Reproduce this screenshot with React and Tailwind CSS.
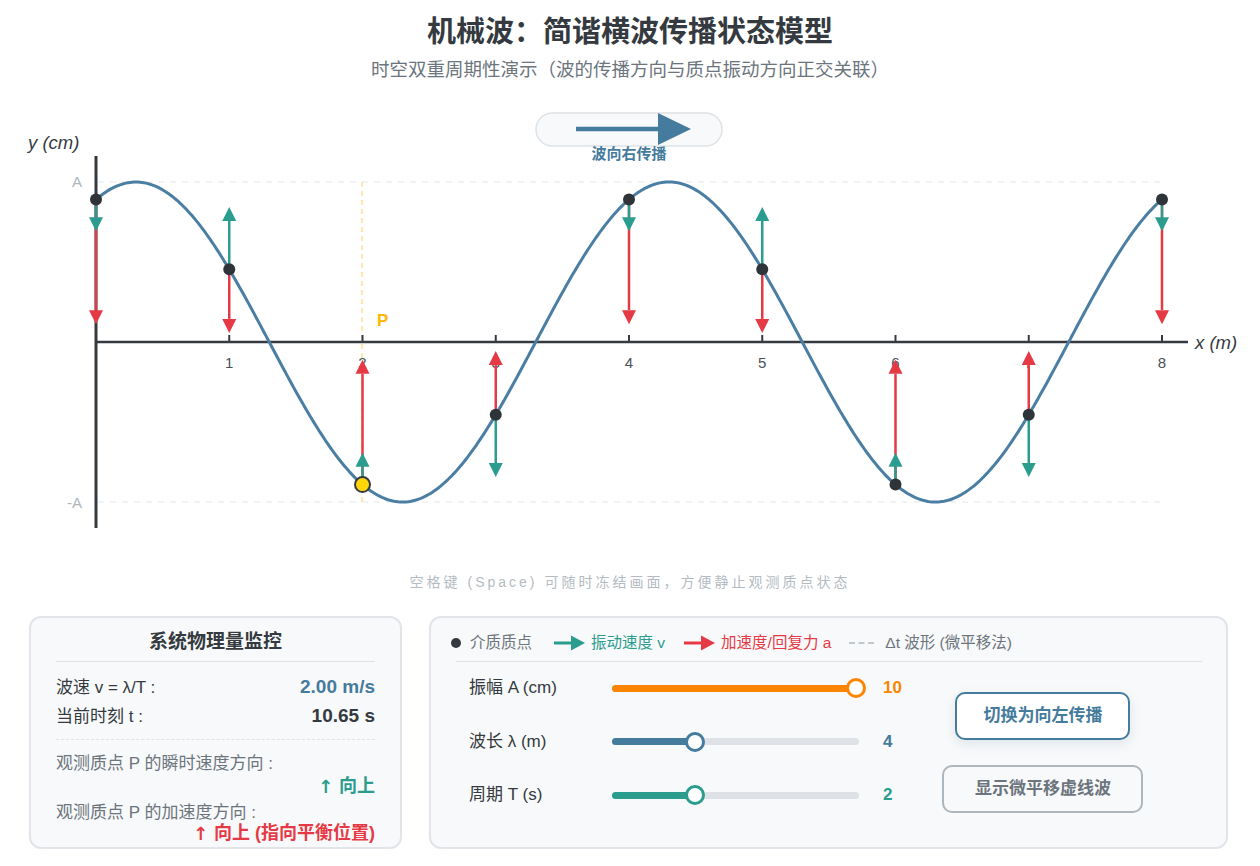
import React from 'react';

const X0 = 96;
const SX = 133.25;
const Y0 = 342;
const AMP = 160;

const disp = (m) => Math.cos((2 * Math.PI * (m - 0.3)) / 4);
const vel = (m) => Math.sin((2 * Math.PI * (m - 0.3)) / 4);

const RED = '#e63946';
const TEAL = '#2a9d8f';
const BLUE = '#457b9d';
const DARK = '#343a40';

function wavePath() {
    const pts = [];
    for (let px = 0; px <= 1066; px += 2) {
        const m = px / SX;
        pts.push(`${(X0 + px).toFixed(1)},${(Y0 - AMP * disp(m)).toFixed(1)}`);
    }
    return 'M' + pts.join(' L');
}

const VArrow = ({ x, y, len, color }) => {
    // len > 0 means downward, < 0 upward
    const dir = len > 0 ? 1 : -1;
    const tip = y + len;
    const base = tip - dir * 14;
    return (
        <g>
            {Math.abs(len) > 14 && (
                <line x1={x} y1={y} x2={x} y2={base} stroke={color} strokeWidth="2.5" />
            )}
            <polygon points={`${x - 7},${base} ${x + 7},${base} ${x},${tip}`} fill={color} />
        </g>
    );
};

const WaveChart = () => {
    const marks = [0, 1, 2, 3, 4, 5, 6, 7, 8].map((m) => ({
        m,
        x: X0 + m * SX,
        y: Y0 - AMP * disp(m),
        v: vel(m),
        d: disp(m),
    }));

    return (
        <svg width="1260" height="482" viewBox="0 90 1260 482" className="block">
            {/* direction pill */}
            <rect x="536" y="113" width="186" height="33" rx="16.5" fill="#f8f9fa" stroke="#dee2e6" strokeWidth="1.5" />
            <line x1="576" y1="129" x2="660" y2="129" stroke={BLUE} strokeWidth="4.5" />
            <polygon points="658,113 691,129 658,145" fill={BLUE} />
            <text x="629" y="159" textAnchor="middle" fontSize="15" fontWeight="700" fill={BLUE}>波向右传播</text>

            {/* amplitude guides */}
            <line x1="98" y1="182" x2="1160" y2="182" stroke="#e3e6ea" strokeWidth="1" strokeDasharray="6 6" />
            <line x1="98" y1="502" x2="1160" y2="502" stroke="#e3e6ea" strokeWidth="1" strokeDasharray="6 6" />
            <text x="82" y="187" textAnchor="end" fontSize="15" fill="#adb5bd">A</text>
            <text x="82" y="508" textAnchor="end" fontSize="15" fill="#adb5bd">-A</text>

            {/* P guide */}
            <line x1="362" y1="182" x2="362" y2="502" stroke="#ffd166" strokeOpacity="0.7" strokeWidth="1.5" strokeDasharray="5 4" />
            <text x="377" y="326" fontSize="17" fontWeight="700" fill="#ffb703">P</text>

            {/* axes */}
            <line x1="96" y1="156" x2="96" y2="528" stroke={DARK} strokeWidth="3" />
            <line x1="96" y1="342" x2="1188" y2="342" stroke={DARK} strokeWidth="2.5" />
            <text x="28" y="149" fontSize="18.5" fontStyle="italic" fill={DARK}>y (cm)</text>
            <text x="1195" y="349" fontSize="18.5" fontStyle="italic" fill={DARK}>x (m)</text>
            {[1, 2, 3, 4, 5, 6, 7, 8].map((m) => (
                <g key={m}>
                    <line x1={X0 + m * SX} y1="335" x2={X0 + m * SX} y2="342" stroke={DARK} strokeWidth="2" />
                    <text x={X0 + m * SX} y="368" textAnchor="middle" fontSize="15" fill="#495057">{m}</text>
                </g>
            ))}

            {/* wave */}
            <path d={wavePath()} fill="none" stroke="#4a7fa3" strokeWidth="3" strokeLinecap="round" />

            {/* acceleration arrows */}
            {marks.map((p) => (
                <VArrow key={'a' + p.m} x={p.x} y={p.y} len={140 * p.d} color={RED} />
            ))}
            {/* velocity arrows */}
            {marks.map((p) => (
                <VArrow key={'v' + p.m} x={p.x} y={p.y} len={-70 * p.v} color={TEAL} />
            ))}

            {/* particles */}
            {marks.map((p) =>
                p.m === 2 ? (
                    <circle key={'d' + p.m} cx={p.x} cy={p.y} r="7.5" fill="#ffd60a" stroke={DARK} strokeWidth="2" />
                ) : (
                    <circle key={'d' + p.m} cx={p.x} cy={p.y} r="6" fill="#2f3439" />
                )
            )}
        </svg>
    );
};

const LegendArrow = ({ color }) => (
    <svg width="32" height="16" viewBox="0 0 32 16" className="shrink-0">
        <line x1="0" y1="8" x2="18" y2="8" stroke={color} strokeWidth="3" />
        <polygon points="17,0.5 31,8 17,15.5" fill={color} />
    </svg>
);

const sliders = [
    { label: '振幅 A (cm)', value: '10', fill: 'w-[247px] bg-[#fb8500]', thumb: 'left-[234px] border-[#fb8500]', text: 'text-[#fb8500]' },
    { label: '波长 λ (m)', value: '4', fill: 'w-[83px] bg-[#457b9d]', thumb: 'left-[73px] border-[#457b9d]', text: 'text-[#457b9d]' },
    { label: '周期 T (s)', value: '2', fill: 'w-[83px] bg-[#2a9d8f]', thumb: 'left-[73px] border-[#2a9d8f]', text: 'text-[#2a9d8f]' },
];

const MonitorPanel = () => (
    <div className="w-[373px] h-[233px] rounded-xl border-2 border-[#e1e5e9] bg-[#f8f9fa] px-[25px]">
        <div className="h-[44px] pt-[6px] flex items-center justify-center border-b border-[#dee2e6] text-[19px] font-bold text-[#343a40]">
            系统物理量监控
        </div>
        <div className="pt-[11px]">
            <div className="h-[29px] flex items-center justify-between text-[17px] text-[#343a40]">
                <span>波速 v = λ/T :</span>
                <span className="text-[19px] font-bold text-[#457b9d]">2.00 m/s</span>
            </div>
            <div className="h-[29px] flex items-center justify-between text-[17px] text-[#343a40]">
                <span>当前时刻 t :</span>
                <span className="text-[19px] font-bold text-[#343a40]">10.65 s</span>
            </div>
        </div>
        <div className="mt-[8px] border-t border-dashed border-[#dee2e6]" />
        <div className="mt-[13px] h-[22px] flex items-center text-[17px] text-[#6c757d]">观测质点 P 的瞬时速度方向 :</div>
        <div className="h-[22px] flex items-center justify-end text-[18px] font-bold text-[#2a9d8f]">
            <span className="font-['DejaVu_Sans'] mr-[6px]">↑</span>向上
        </div>
        <div className="mt-[6px] h-[20px] flex items-center text-[17px] text-[#6c757d]">观测质点 P 的加速度方向 :</div>
        <div className="h-[20px] flex items-center justify-end text-[18px] font-bold text-[#e63946]">
            <span className="font-['DejaVu_Sans'] mr-[6px]">↑</span>向上 (指向平衡位置)
        </div>
    </div>
);

const ControlPanel = () => (
    <div className="w-[799px] h-[233px] rounded-xl border-2 border-[#e1e5e9] bg-[#f8f9fa] pl-[25px] pr-[24px]">
        <div className="h-[44px] pt-[6px] flex items-center border-b border-[#dee2e6] text-[15.5px]">
            <span className="w-[10px] h-[10px] rounded-full bg-[#343a40] ml-[-5px] mr-[9px]" />
            <span className="text-[#6c757d]">介质质点</span>
            <span className="ml-[22px] mr-[5px] flex"><LegendArrow color={TEAL} /></span>
            <span className="text-[#2a9d8f]">振动速度 v</span>
            <span className="ml-[19px] mr-[5px] flex"><LegendArrow color={RED} /></span>
            <span className="text-[#e63946]">加速度/回复力 a</span>
            <span className="ml-[18px] mr-[11px] w-[25px] border-t-2 border-dashed border-[#c3c8cd]" />
            <span className="text-[#6c757d]">Δt 波形 (微平移法)</span>
        </div>
        <div className="flex">
            <div className="pl-[13px] pt-[11px] flex flex-col gap-[23.5px]">
                {sliders.map((s) => (
                    <div key={s.label} className="h-[30px] flex items-center">
                        <span className="w-[143px] text-[17px] text-[#343a40]">{s.label}</span>
                        <div className="relative w-[247px] h-[7px] rounded-full bg-[#dee2e6]">
                            <div className={`h-full rounded-full ${s.fill}`} />
                            <div className={`absolute top-[-6.5px] w-[20px] h-[20px] rounded-full bg-white border-[3px] ${s.thumb}`} />
                        </div>
                        <span className={`ml-[24px] text-[17px] font-bold ${s.text}`}>{s.value}</span>
                    </div>
                ))}
            </div>
            <div className="flex-1 flex flex-col items-center pt-[30px] gap-[25px] pr-[18px]">
                <button className="w-[175px] h-[48px] rounded-[10px] border-2 border-[#457b9d] bg-white text-[17px] font-bold text-[#457b9d] shadow-[0_4px_12px_rgba(69,123,157,0.15)]">
                    切换为向左传播
                </button>
                <button className="w-[201px] h-[48px] rounded-[10px] border-2 border-[#adb5bd] bg-transparent text-[17px] font-bold text-[#6c757d]">
                    显示微平移虚线波
                </button>
            </div>
        </div>
    </div>
);

export default function App() {
    return (
        <div className="w-[1260px] h-[866px] bg-white overflow-hidden font-['Liberation_Sans','Noto_Sans_CJK_SC',sans-serif]">
            <div className="pt-[14px] text-center">
                <h1 className="h-[36px] leading-[36px] text-[29px] font-bold text-[#343a40]">机械波：简谐横波传播状态模型</h1>
                <p className="mt-[7px] h-[26px] leading-[26px] text-[18.5px] text-[#6c757d]">时空双重周期性演示（波的传播方向与质点振动方向正交关联）</p>
            </div>
            <div className="mt-[7px]">
                <WaveChart />
            </div>
            <p className="h-[20px] leading-[20px] text-center text-[14px] tracking-[3px] text-[#b4bbc2]">
                空格键 (Space) 可随时冻结画面，方便静止观测质点状态
            </p>
            <div className="mt-[24px] ml-[29px] flex gap-[27px]">
                <MonitorPanel />
                <ControlPanel />
            </div>
        </div>
    );
}
